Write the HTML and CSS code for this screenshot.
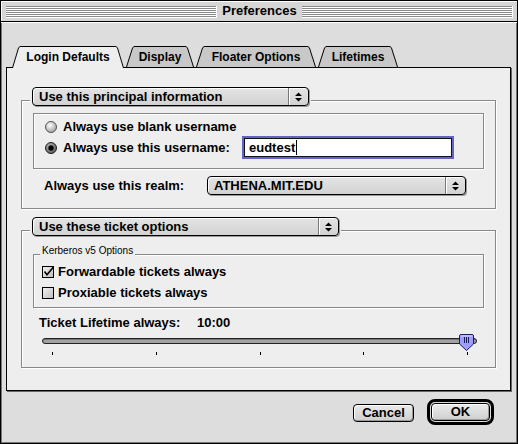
FILE: index.html
```html
<!DOCTYPE html>
<html>
<head>
<meta charset="utf-8">
<title>Preferences</title>
<link rel="stylesheet" href="styles.css">
</head>
<body>
<div class="window">
  <div class="titlebar">
    <span class="stripes"></span>
    <span class="title">Preferences</span>
    <span class="stripes"></span>
  </div>
  <div class="content">
    <div class="tabs">
      <div class="tab tab-login active">Login Defaults</div>
      <div class="tab tab-display">Display</div>
      <div class="tab tab-floater">Floater Options</div>
      <div class="tab tab-lifetimes">Lifetimes</div>
    </div>
    <div class="panel">
      <div class="group group-principal">
        <div class="group-head">
          <div class="popup popup-principal">
            <span class="popup-label">Use this principal information</span>
            <span class="popup-arrows"><svg width="7" height="10" viewBox="0 0 7 10"><path d="M3.5 0.5 L7 4 L0 4 Z M0 6 L7 6 L3.5 9.5 Z" fill="#000"/></svg></span>
          </div>
        </div>
        <div class="inset-box radios">
          <div class="radio-row">
            <svg class="radio" width="12" height="12" viewBox="0 0 12 12">
              <defs><radialGradient id="rg1" cx="0.4" cy="0.35" r="0.7"><stop offset="0" stop-color="#ffffff"/><stop offset="1" stop-color="#9a9a9a"/></radialGradient></defs>
              <circle cx="6" cy="6" r="5.5" fill="url(#rg1)" stroke="#555"/>
            </svg>
            <span>Always use blank username</span>
          </div>
          <div class="radio-row row-username">
            <svg class="radio" width="12" height="12" viewBox="0 0 12 12">
              <defs><radialGradient id="rg2" cx="0.4" cy="0.35" r="0.7"><stop offset="0" stop-color="#bbbbbb"/><stop offset="1" stop-color="#555555"/></radialGradient></defs>
              <circle cx="6" cy="6" r="5.5" fill="url(#rg2)" stroke="#222"/>
              <circle cx="6" cy="6" r="2.7" fill="#000"/>
            </svg>
            <span class="username-label">Always use this username:</span>
            <div class="text-field">eudtest<span class="caret"></span></div>
          </div>
        </div>
        <div class="realm-row">
          <span class="realm-label">Always use this realm:</span>
          <div class="popup popup-realm">
            <span class="popup-label">ATHENA.MIT.EDU</span>
            <span class="popup-arrows"><svg width="7" height="10" viewBox="0 0 7 10"><path d="M3.5 0.5 L7 4 L0 4 Z M0 6 L7 6 L3.5 9.5 Z" fill="#000"/></svg></span>
          </div>
        </div>
      </div>

      <div class="group group-ticket">
        <div class="group-head">
          <div class="popup popup-ticket">
            <span class="popup-label">Use these ticket options</span>
            <span class="popup-arrows"><svg width="7" height="10" viewBox="0 0 7 10"><path d="M3.5 0.5 L7 4 L0 4 Z M0 6 L7 6 L3.5 9.5 Z" fill="#000"/></svg></span>
          </div>
        </div>
        <div class="inset-box kerberos">
          <span class="legend">Kerberos v5 Options</span>
          <div class="check-row">
            <svg class="check" width="13" height="12" viewBox="0 0 13 12">
              <defs><linearGradient id="cg" x1="0" y1="0" x2="1" y2="1"><stop offset="0" stop-color="#f4f4f4"/><stop offset="1" stop-color="#bcbcbc"/></linearGradient></defs>
              <rect x="0.5" y="0.5" width="11" height="11" fill="url(#cg)" stroke="#000"/>
              <path d="M2.5 5.5 L5 8.8 L11.5 1" fill="none" stroke="#000" stroke-width="1.6"/>
            </svg>
            <span>Forwardable tickets always</span>
          </div>
          <div class="check-row">
            <svg class="check" width="13" height="12" viewBox="0 0 13 12">
              <rect x="0.5" y="0.5" width="11" height="11" fill="url(#cg)" stroke="#000"/>
            </svg>
            <span>Proxiable tickets always</span>
          </div>
        </div>
        <div class="lifetime-row">
          <span class="lifetime-label">Ticket Lifetime always:</span>
          <span>10:00</span>
        </div>
        <div class="slider">
          <div class="track"></div>
          <div class="ticks"><i></i><i></i><i></i><i></i><i></i></div>
          <svg class="thumb" width="18" height="19" viewBox="0 0 18 19">
            <path d="M1.5 3 Q1.5 1.5 3 1.5 H14 Q15.5 1.5 15.5 3 V11 L8.5 17.5 L1.5 11 Z" fill="#9d9dff" stroke="#1c1c5a"/>
            <path d="M2.5 3 H14.5" stroke="#d6d6ff"/>
            <path d="M6.5 4 V10 M8.5 4 V10 M10.5 4 V10" stroke="#1c1c5a"/>
          </svg>
        </div>
      </div>
    </div>

    <div class="buttons">
      <div class="button btn-cancel">Cancel</div>
      <div class="default-ring"><div class="button btn-ok">OK</div></div>
    </div>
  </div>
</div>
</body>
</html>
```

FILE: styles.css
```css
* { box-sizing: border-box; }
html, body { margin: 0; padding: 0; }
body {
  width: 518px;
  height: 444px;
  background: #ddd;
  font-family: "Liberation Sans", Arial, sans-serif;
  font-size: 13px;
  font-weight: bold;
  color: #000;
  overflow: hidden;
}
.window {
  width: 518px;
  height: 444px;
  border: 1px solid #000;
  background: #ddd;
  display: flex;
  flex-direction: column;
  box-shadow: inset -1px -1px 0 #777, inset 1px 0 0 #777;
}
.titlebar {
  height: 21px;
  flex: none;
  display: flex;
  align-items: center;
  gap: 5px;
  padding: 0 4px 0 5px;
  background: #d6d6d6;
  border-bottom: 1px solid #000;
  box-shadow: inset 1px 1px 0 #fff;
}
.stripes {
  flex: 1;
  height: 12px;
  margin-top: 1px;
  background: repeating-linear-gradient(to bottom, #8a8a8a 0 1px, #fff 1px 2px);
  border-right: 1px solid #fff;
}
.title {
  font-size: 13px;
  line-height: 16px;
}
.content {
  flex: 1;
  display: flex;
  flex-direction: column;
  padding: 24px 6px 0 5px;
  box-shadow: inset 0 1px 0 #fff;
}
.tabs {
  display: flex;
  align-items: flex-start;
  gap: 2px;
  height: 22px;
  margin: 0 0 -1px 6px;
  position: relative;
  z-index: 1;
}
.tab {
  position: relative;
  height: 21px;
  display: flex;
  align-items: center;
  justify-content: center;
  font-size: 12px;
  padding-top: 1px;
  background: #000;
  clip-path: polygon(0 100%, 6px 2px, 8px 0, calc(100% - 8px) 0, calc(100% - 6px) 2px, 100% 100%);
}
.tab::before {
  content: "";
  position: absolute;
  inset: 1px 1px 0 1px;
  background: #c8c8c8;
  clip-path: polygon(0 100%, 6px 1px, 7px 0, calc(100% - 7px) 0, calc(100% - 6px) 1px, 100% 100%);
  z-index: -1;
}
.tab.active { height: 22px; padding-bottom: 1px; }
.tab.active::before { background: #eee; }
.tab-login { width: 112px; }
.tab-display { width: 68px; }
.tab-floater { width: 120px; }
.tab-lifetimes { width: 80px; }

.panel {
  height: 324px;
  flex: none;
  border: 1px solid #000;
  background: #eee;
  padding: 32px 14px 0;
  box-shadow: 1px 1px 0 #666;
  display: flex;
  flex-direction: column;
}
.group {
  border: 1px solid #888;
  box-shadow: inset 1px 1px 0 #fff, 1px 1px 0 #fff;
  display: flex;
  flex-direction: column;
}
.group-ticket { margin-top: 21px; }
.group-head {
  align-self: flex-start;
  margin: -14px 0 0 8px;
  padding: 0 2px 0 2px;
  background: #eee;
  position: relative;
}
.popup {
  display: flex;
  height: 19px;
  border: 1px solid #000;
  border-radius: 4px;
  background: linear-gradient(#e4e4e4, #d2d2d2);
  box-shadow: inset 1px 1px 0 #fff, 1px 1px 0 #999;
}
.popup-principal { width: 277px; }
.popup-ticket { width: 307px; }
.popup-realm { width: 259px; }
.popup-label {
  flex: 1;
  display: flex;
  align-items: center;
  padding-left: 6px;
  line-height: 16px;
}
.popup-arrows {
  width: 20px;
  flex: none;
  display: flex;
  align-items: center;
  justify-content: center;
  border-left: 1px solid #777;
  box-shadow: inset 1px 0 0 #fff;
}
.inset-box {
  border: 1px solid #888;
  box-shadow: inset 1px 1px 0 #fff, 1px 1px 0 #fff;
  display: flex;
  flex-direction: column;
}
.radios {
  margin: 7px 11px 0;
  padding: 5px 0 9px 11px;
}
.radio-row {
  display: flex;
  align-items: center;
  gap: 6px;
  height: 16px;
  line-height: 16px;
}
.radio { flex: none; }
.row-username { height: 23px; margin-top: 1px; }
.username-label { width: 173px; }
.text-field {
  width: 212px;
  height: 23px;
  border: 2px solid #6464c8;
  box-shadow: inset 0 0 0 1px #111;
  background: #fff;
  padding-left: 5px;
  display: flex;
  align-items: center;
  line-height: 16px;
}
.caret {
  display: inline-block;
  width: 1px;
  height: 15px;
  background: #000;
  margin-left: 1px;
}
.realm-row {
  display: flex;
  align-items: center;
  margin: 7px 0 13px;
  padding-left: 22px;
}
.realm-label { width: 163px; }

.kerberos {
  margin: 18px 11px 0;
  padding: 0 0 6px 8px;
}
.legend {
  align-self: flex-start;
  margin: -10px 0 0 -2px;
  padding: 0 2px;
  background: #eee;
  font-weight: normal;
  font-size: 10px;
  line-height: 12px;
}
.check-row {
  display: flex;
  align-items: center;
  gap: 3px;
  height: 16px;
  line-height: 16px;
  margin-top: 5px;
}
.legend + .check-row { margin-top: 7px; }
.check { flex: none; }
.lifetime-row {
  display: flex;
  margin-top: 7px;
  padding-left: 17px;
  height: 16px;
  line-height: 16px;
}
.lifetime-label { width: 158px; }
.slider {
  position: relative;
  margin: 2px 18px 12px 20px;
  display: flex;
  flex-direction: column;
}
.track {
  margin-top: 5px;
  height: 6px;
  border: 1px solid #222;
  border-radius: 3px;
  background: #a2a2a2;
  box-shadow: inset 0 1px 0 #777;
}
.ticks {
  display: flex;
  justify-content: space-between;
  margin-top: 8px;
  padding: 0 9px 0 10px;
  height: 3px;
}
.ticks i {
  display: block;
  width: 1px;
  height: 3px;
  background: #000;
}
.thumb {
  position: absolute;
  left: 416px;
  top: 0;
}
.buttons {
  display: flex;
  justify-content: flex-end;
  align-items: center;
  gap: 13px;
  margin-top: 8px;
  padding-right: 17px;
}
.button {
  height: 18px;
  border: 1px solid #000;
  border-radius: 4px;
  background: linear-gradient(#eaeaea, #cfcfcf);
  box-shadow: inset 1px 1px 0 #fff, inset -1px -1px 0 #999;
  display: flex;
  align-items: center;
  justify-content: center;
  line-height: 16px;
}
.btn-cancel { width: 61px; margin-top: 1px; }
.default-ring {
  width: 67px;
  height: 26px;
  border: 3px solid #000;
  border-radius: 8px;
  padding: 1px;
  background: #ddd;
}
.btn-ok { width: 100%; height: 18px; }
```
